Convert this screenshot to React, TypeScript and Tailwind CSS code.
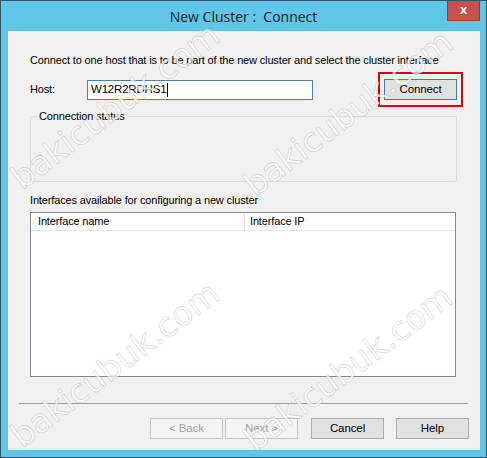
import React from "react";

const marks = [
  { left: 114, top: 105 },
  { left: 347, top: 112 },
  { left: 114, top: 363 },
  { left: 347, top: 367 },
];

const Watermark = ({ left, top }: { left: number; top: number }) => (
  <div
    className="pointer-events-none absolute -translate-x-1/2 -translate-y-1/2 -rotate-[37deg] whitespace-nowrap text-[33px] leading-none text-white/70 [font-family:'DejaVu_Sans',sans-serif] [-webkit-text-stroke:0.7px_rgba(140,140,140,0.35)]"
    style={{ left, top }}
  >
    bakicubuk.com
  </div>
);

const WinButton = ({
  label,
  disabled,
  primary,
  className = "",
}: {
  label: string;
  disabled?: boolean;
  primary?: boolean;
  className?: string;
}) => (
  <div
    className={
      "flex h-[21px] w-[73px] items-center justify-center border text-[11.5px] tracking-[-0.1px] " +
      (disabled
        ? "border-[#c6c6c6] bg-[#f4f4f4] text-[#a3a3a3] "
        : primary
        ? "border-[#3c7fb1] bg-[#e1e1e1] text-black "
        : "border-[#adadad] bg-[#e1e1e1] text-black ") +
      className
    }
  >
    {label}
  </div>
);

export default function App() {
  return (
    <div className="relative h-[458px] w-[487px] overflow-hidden border border-[#2f5566] bg-[#60c5e9] [font-family:'Liberation_Sans',Arial,sans-serif]">
      {/* title bar */}
      <div className="relative flex h-[30px] items-center justify-center">
        <span className="mt-[1px] text-[14px] text-[#1b1b1b] [font-family:'Open_Sans',sans-serif]">
          New Cluster :&nbsp; Connect
        </span>
        <div className="absolute right-[6px] top-[-1px] flex h-[21px] w-[33px] items-center justify-center border border-[#9a3a3a] bg-[#c75050] pb-[2px] text-[13px] font-bold text-white">
          x
        </div>
      </div>

      {/* client area */}
      <div className="ml-[7px] h-[419px] w-[472px] bg-[#f0f0f0] pt-[22px] text-[11px] tracking-[-0.15px] text-black">
        <div className="pl-[22px] leading-[14px]">
          Connect to one host that is to be part of the new cluster and select the cluster interface
        </div>

        <div className="mt-[5px] flex items-center pl-[22px]">
          <span className="w-[57px]">Host:</span>
          <div className="flex h-[20px] w-[226px] items-center border border-[#4f7ea8] bg-white pl-[3px] text-[11.5px] tracking-[-0.2px]">
            W12R2RDHS1
            <span className="ml-[1px] h-[14px] w-px bg-black" />
          </div>
          <div className="ml-[65px] border-2 border-[#e30000] px-[4px] py-[5px]">
            <WinButton label="Connect" primary />
          </div>
        </div>

        <div className="relative mx-[22px] mt-[9px] h-[66px] w-[427px] rounded-[2px] border border-[#dcdcdc]">
          <span className="absolute left-[7px] top-[-8px] bg-[#f0f0f0] px-[1px] leading-[14px]">
            Connection status
          </span>
        </div>

        <div className="mt-[11px] pl-[22px] leading-[14px]">
          Interfaces available for configuring a new cluster
        </div>

        <div className="ml-[22px] mt-[5px] h-[165px] w-[426px] border border-[#828790] bg-white">
          <div className="flex h-[18px] border-b border-[#e5e5e5]">
            <div className="w-[214px] border-r border-[#e5e5e5] pl-[7px] leading-[17px]">
              Interface name
            </div>
            <div className="pl-[5px] leading-[17px]">Interface IP</div>
          </div>
        </div>

        <div className="ml-[11px] mt-[26px] h-px w-[449px] bg-[#a0a0a0]" />

        <div className="mt-[14px] flex pl-[142px]">
          <WinButton label="< Back" disabled />
          <WinButton label="Next >" disabled className="ml-[2px]" />
          <WinButton label="Cancel" className="ml-[13px]" />
          <WinButton label="Help" className="ml-[12px]" />
        </div>
      </div>

      {marks.map((m, i) => (
        <Watermark key={i} left={m.left} top={m.top} />
      ))}
    </div>
  );
}
